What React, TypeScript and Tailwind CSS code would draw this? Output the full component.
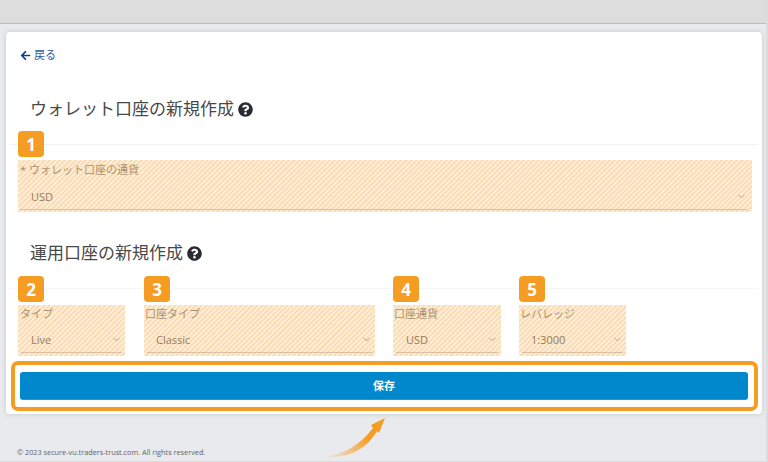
import { ChevronDown } from "lucide-react";
import { FaArrowLeft, FaQuestionCircle } from "react-icons/fa";

const hatch =
  "absolute inset-0 rounded-[1px] bg-[repeating-linear-gradient(135deg,rgba(247,170,70,0.4)_0px,rgba(247,170,70,0.4)_2.2px,rgba(247,170,70,0.18)_2.2px,rgba(247,170,70,0.18)_3.6px)]";

function Badge({ n }: { n: number }) {
  return (
    <div className="absolute left-0 top-[-29px] z-10 flex h-[26px] w-[26px] items-center justify-center rounded-[4px] bg-[#f59d23] text-[17px] font-bold leading-none text-white">
      {n}
    </div>
  );
}

function Field({
  n,
  label,
  value,
  className,
  labelClass,
  selectClass,
}: {
  n: number;
  label: string;
  value: string;
  className: string;
  labelClass: string;
  selectClass: string;
}) {
  return (
    <div className={`relative ${className}`}>
      <Badge n={n} />
      <div className={`text-[11px] leading-[16px] text-[#858585] ${labelClass}`}>{label}</div>
      <div
        className={`flex h-[22px] items-start justify-between border-b border-[#ccc] text-[11px] leading-[16px] text-[#666] ${selectClass}`}
      >
        <span className="mt-[1px]">{value}</span>
        <ChevronDown size={11} strokeWidth={1.5} className="mt-[3px] text-[#777]" />
      </div>
      <div className={hatch} />
    </div>
  );
}

function Heading({ children }: { children: string }) {
  return (
    <div className="flex h-[24px] items-center gap-[4px] pl-[24px] text-[17px] leading-[24px] text-[#484848]">
      <span>{children}</span>
      <FaQuestionCircle size={15} className="mt-[1px] text-[#272b33]" />
    </div>
  );
}

export default function App() {
  return (
    <div className="relative flex h-[462px] w-[768px] flex-col overflow-hidden border-r-2 border-b border-[#dcdcdc] bg-[#e9eaee] font-['Open_Sans','Noto_Sans_CJK_JP',sans-serif]">
      {/* top bar */}
      <div className="h-[24px] shrink-0 border-b border-[#bdbdbd] bg-[#dddddd]" />

      {/* card */}
      <div className="ml-[6px] mt-[8px] h-[382px] w-[756px] shrink-0 rounded-[4px] bg-white pt-[16px] shadow-[0_0_5px_rgba(60,65,90,0.2)]">
        <div className="flex h-[14px] items-center gap-[3px] pl-[14px] text-[11px] text-[#2b5d9a]">
          <FaArrowLeft size={11} className="text-[#123f85]" />
          <span>戻る</span>
        </div>

        <div className="mt-[35px]">
          <Heading>ウォレット口座の新規作成</Heading>
        </div>
        <div className="mx-[4px] mt-[23px] h-px bg-[#f1f2f4]" />
        <div className="mt-[15px] pl-[12px] pr-[10px]">
          <Field
            n={1}
            label="* ウォレット口座の通貨"
            value="USD"
            className="h-[52px] w-full pt-[2px]"
            labelClass="mb-[10px] pl-[2px]"
            selectClass="ml-[2px] mr-[5px] pl-[11px]"
          />
        </div>

        <div className="mt-[29px]">
          <Heading>運用口座の新規作成</Heading>
        </div>
        <div className="mx-[4px] mt-[23px] h-px bg-[#f6f6f8]" />
        <div className="mt-[16px] flex pl-[12px]">
          <Field
            n={2}
            label="タイプ"
            value="Live"
            className="h-[51px] w-[107px] pt-[1px]"
            labelClass="mb-[9px] pl-[2px]"
            selectClass="ml-[3px] mr-[3px] pl-[10px]"
          />
          <Field
            n={3}
            label="口座タイプ"
            value="Classic"
            className="ml-[19px] h-[51px] w-[231px] pt-[1px]"
            labelClass="mb-[9px] pl-[1px]"
            selectClass="ml-[3px] mr-[3px] pl-[9px]"
          />
          <Field
            n={4}
            label="口座通貨"
            value="USD"
            className="ml-[18px] h-[51px] w-[108px] pt-[1px]"
            labelClass="mb-[9px] pl-[1px]"
            selectClass="ml-[3px] mr-[3px] pl-[10px]"
          />
          <Field
            n={5}
            label="レバレッジ"
            value="1:3000"
            className="ml-[18px] h-[51px] w-[107px] pt-[1px]"
            labelClass="mb-[9px] pl-[1px]"
            selectClass="ml-[3px] mr-[3px] pl-[9px]"
          />
        </div>

        <div className="relative ml-[14px] mt-[16px] h-[28px] w-[728px]">
          <div className="flex h-full items-center justify-center rounded-[3px] border-b border-[#3d8fc0] bg-[#0088cc] pt-[2px] text-[11px] font-bold text-white">
            保存
          </div>
          <div className="absolute bottom-[-11px] left-[-9px] right-[-10px] top-[-11px] rounded-[7px] border-[4px] border-[#f59d23]" />
        </div>
      </div>

      {/* footer */}
      <div className="ml-[17px] mt-[32px] text-[7.3px] leading-[12px] text-[#5f6368]">
        © 2023 secure-vu.traders-trust.com. All rights reserved.
      </div>

      {/* arrow to the save button */}
      <svg className="absolute left-[320px] top-[415px]" width="70" height="45" viewBox="0 0 70 45">
        <defs>
          <linearGradient id="arrowFade" x1="0" y1="1" x2="1" y2="0">
            <stop offset="0" stopColor="#f59d23" stopOpacity="0" />
            <stop offset="0.6" stopColor="#f59d23" />
          </linearGradient>
        </defs>
        <path
          d="M2 42 C 24 40 40 30 53 13 L 51 10 L 65 3 L 59 18 L 57 16 C 46 35 28 44 2 42 Z"
          fill="url(#arrowFade)"
        />
      </svg>
    </div>
  );
}
